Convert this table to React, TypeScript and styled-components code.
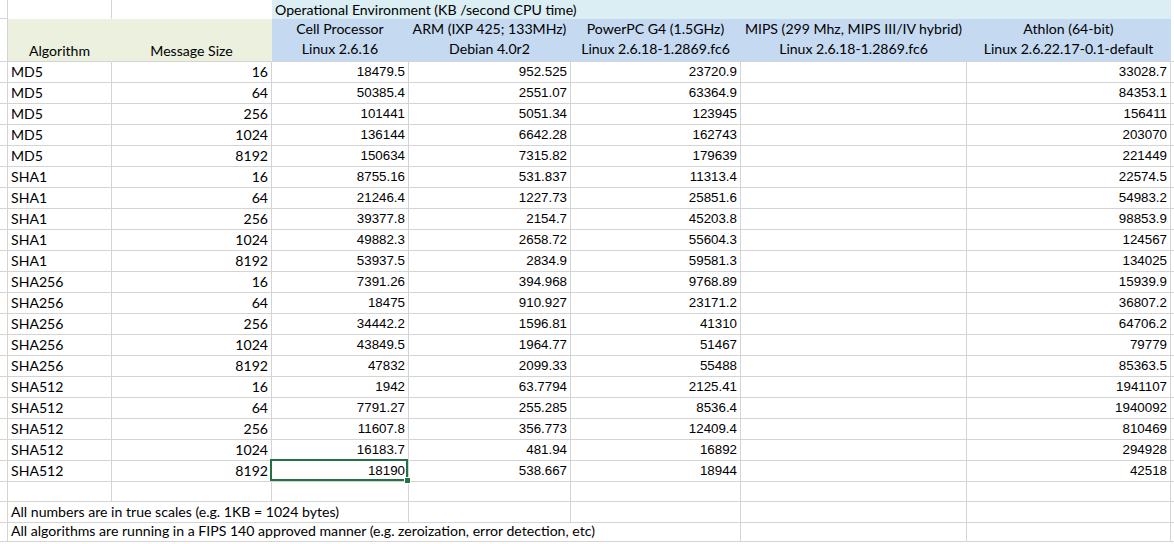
import React from "react";
import styled, { createGlobalStyle } from "styled-components";

const GlobalStyle = createGlobalStyle`
  html, body { margin: 0; padding: 0; background: #fff; }
  body { overflow: hidden; }
`;

const GRID = "#D4D4D4";
const TEXT_FONT = `Lato, "Open Sans", "Noto Sans", sans-serif`;
const NUM_FONT = `"Liberation Sans", Arial, sans-serif`;
const TEXT_SIZE = "14.1px";
const CYAN = "#DAEEF3";
const BLUE = "#C5D9F1";
const GREEN = "#EBF1DE";

const Sheet = styled.div`
  display: grid;
  grid-template-columns: 8px 104px 160px 137px 162px 170px 226px 204px 1fr;
  grid-template-rows: 19px 43px repeat(20, 21px) 20px 21px 19px;
  width: 1174px;
  color: #000;
`;

type CellProps = {
  $fill?: string;
  $noRight?: boolean;
  $noBottom?: boolean;
  $align?: "left" | "right" | "center";
  $num?: boolean;
  $col?: string;
  $pb?: number;
};

const Cell = styled.div<CellProps>`
  box-sizing: border-box;
  display: flex;
  align-items: flex-end;
  justify-content: ${(p) =>
    p.$align === "right" ? "flex-end" : p.$align === "center" ? "center" : "flex-start"};
  padding: 0 3px ${(p) => p.$pb ?? 2}px 3px;
  background: ${(p) => p.$fill ?? "#fff"};
  border-right: 1px solid ${(p) => (p.$noRight ? p.$fill ?? "#fff" : GRID)};
  border-bottom: 1px solid ${(p) => (p.$noBottom ? p.$fill ?? "#fff" : GRID)};
  grid-column: ${(p) => p.$col ?? "auto"};
  font-family: ${(p) => (p.$num ? NUM_FONT : TEXT_FONT)};
  font-size: ${(p) => (p.$num ? "13.33px" : TEXT_SIZE)};
  line-height: 17px;
  white-space: nowrap;
  min-width: 0;
`;

const SelectedCell = styled(Cell)`
  position: relative;
  &::after {
    content: "";
    position: absolute;
    left: -2px;
    top: -2px;
    right: 0;
    bottom: 0;
    border: 2px solid #217346;
    pointer-events: none;
    z-index: 2;
  }
  &::before {
    content: "";
    position: absolute;
    right: -3px;
    bottom: -3px;
    width: 5px;
    height: 5px;
    background: #217346;
    border: 1px solid #fff;
    z-index: 3;
  }
`;

const PlatformHead = styled.div`
  box-sizing: border-box;
  display: flex;
  flex-direction: column;
  align-items: center;
  background: ${BLUE};
  border-right: 1px solid ${BLUE};
  border-bottom: 1px solid ${GRID};
  font-family: ${TEXT_FONT};
  font-size: ${TEXT_SIZE};
  line-height: 20px;
  white-space: nowrap;
  min-width: 0;
`;

const HeadLine = styled.span`
  display: block;
`;

type Row = [string, string, string, string, string, string];

const DATA: Row[] = [
  ["MD5", "16", "18479.5", "952.525", "23720.9", "33028.7"],
  ["MD5", "64", "50385.4", "2551.07", "63364.9", "84353.1"],
  ["MD5", "256", "101441", "5051.34", "123945", "156411"],
  ["MD5", "1024", "136144", "6642.28", "162743", "203070"],
  ["MD5", "8192", "150634", "7315.82", "179639", "221449"],
  ["SHA1", "16", "8755.16", "531.837", "11313.4", "22574.5"],
  ["SHA1", "64", "21246.4", "1227.73", "25851.6", "54983.2"],
  ["SHA1", "256", "39377.8", "2154.7", "45203.8", "98853.9"],
  ["SHA1", "1024", "49882.3", "2658.72", "55604.3", "124567"],
  ["SHA1", "8192", "53937.5", "2834.9", "59581.3", "134025"],
  ["SHA256", "16", "7391.26", "394.968", "9768.89", "15939.9"],
  ["SHA256", "64", "18475", "910.927", "23171.2", "36807.2"],
  ["SHA256", "256", "34442.2", "1596.81", "41310", "64706.2"],
  ["SHA256", "1024", "43849.5", "1964.77", "51467", "79779"],
  ["SHA256", "8192", "47832", "2099.33", "55488", "85363.5"],
  ["SHA512", "16", "1942", "63.7794", "2125.41", "1941107"],
  ["SHA512", "64", "7791.27", "255.285", "8536.4", "1940092"],
  ["SHA512", "256", "11607.8", "356.773", "12409.4", "810469"],
  ["SHA512", "1024", "16183.7", "481.94", "16892", "294928"],
  ["SHA512", "8192", "18190", "538.667", "18944", "42518"],
];

const PLATFORMS: [string, string][] = [
  ["Cell Processor", "Linux 2.6.16"],
  ["ARM (IXP 425; 133MHz)", "Debian 4.0r2"],
  ["PowerPC G4 (1.5GHz)", "Linux 2.6.18-1.2869.fc6"],
  ["MIPS (299 Mhz, MIPS III/IV hybrid)", "Linux 2.6.18-1.2869.fc6"],
  ["Athlon (64-bit)", "Linux 2.6.22.17-0.1-default"],
];

export default function App() {
  const last = DATA.length - 1;
  return (
    <>
      <GlobalStyle />
      <Sheet>
        {/* Row 1 */}
        <Cell />
        <Cell $noBottom />
        <Cell $noBottom $noRight />
        <Cell $col="4 / 9" $fill={CYAN} $noRight $noBottom $pb={0}>
          Operational Environment (KB /second CPU time)
        </Cell>
        <Cell $noRight $noBottom />

        {/* Rows 2-3 */}
        <Cell />
        <Cell $fill={GREEN} $noRight $align="center" $pb={2}>
          Algorithm
        </Cell>
        <Cell $fill={GREEN} $noRight $align="center" $pb={2}>
          Message Size
        </Cell>
        {PLATFORMS.map(([a, b]) => (
          <PlatformHead key={a}>
            <HeadLine>{a}</HeadLine>
            <HeadLine>{b}</HeadLine>
          </PlatformHead>
        ))}
        <Cell $noRight />

        {/* Data */}
        {DATA.map((r, i) => {
          const C = i === last ? SelectedCell : Cell;
          return (
            <React.Fragment key={i}>
              <Cell />
              <Cell>{r[0]}</Cell>
              <Cell $align="right">{r[1]}</Cell>
              <C $num $align="right">
                {r[2]}
              </C>
              <Cell $num $align="right">
                {r[3]}
              </Cell>
              <Cell $num $align="right">
                {r[4]}
              </Cell>
              <Cell />
              <Cell $num $align="right">
                {r[5]}
              </Cell>
              <Cell $noRight />
            </React.Fragment>
          );
        })}

        {/* Blank row */}
        <Cell />
        <Cell />
        <Cell />
        <Cell />
        <Cell />
        <Cell />
        <Cell />
        <Cell />
        <Cell $noRight />

        {/* Note 1 */}
        <Cell />
        <Cell $col="2 / 5">All numbers are in true scales (e.g. 1KB = 1024 bytes)</Cell>
        <Cell />
        <Cell />
        <Cell />
        <Cell />
        <Cell $noRight />

        {/* Note 2 */}
        <Cell />
        <Cell $col="2 / 7">
          All algorithms are running in a FIPS 140 approved manner (e.g. zeroization, error
          detection, etc)
        </Cell>
        <Cell />
        <Cell />
        <Cell $noRight />
      </Sheet>
    </>
  );
}
